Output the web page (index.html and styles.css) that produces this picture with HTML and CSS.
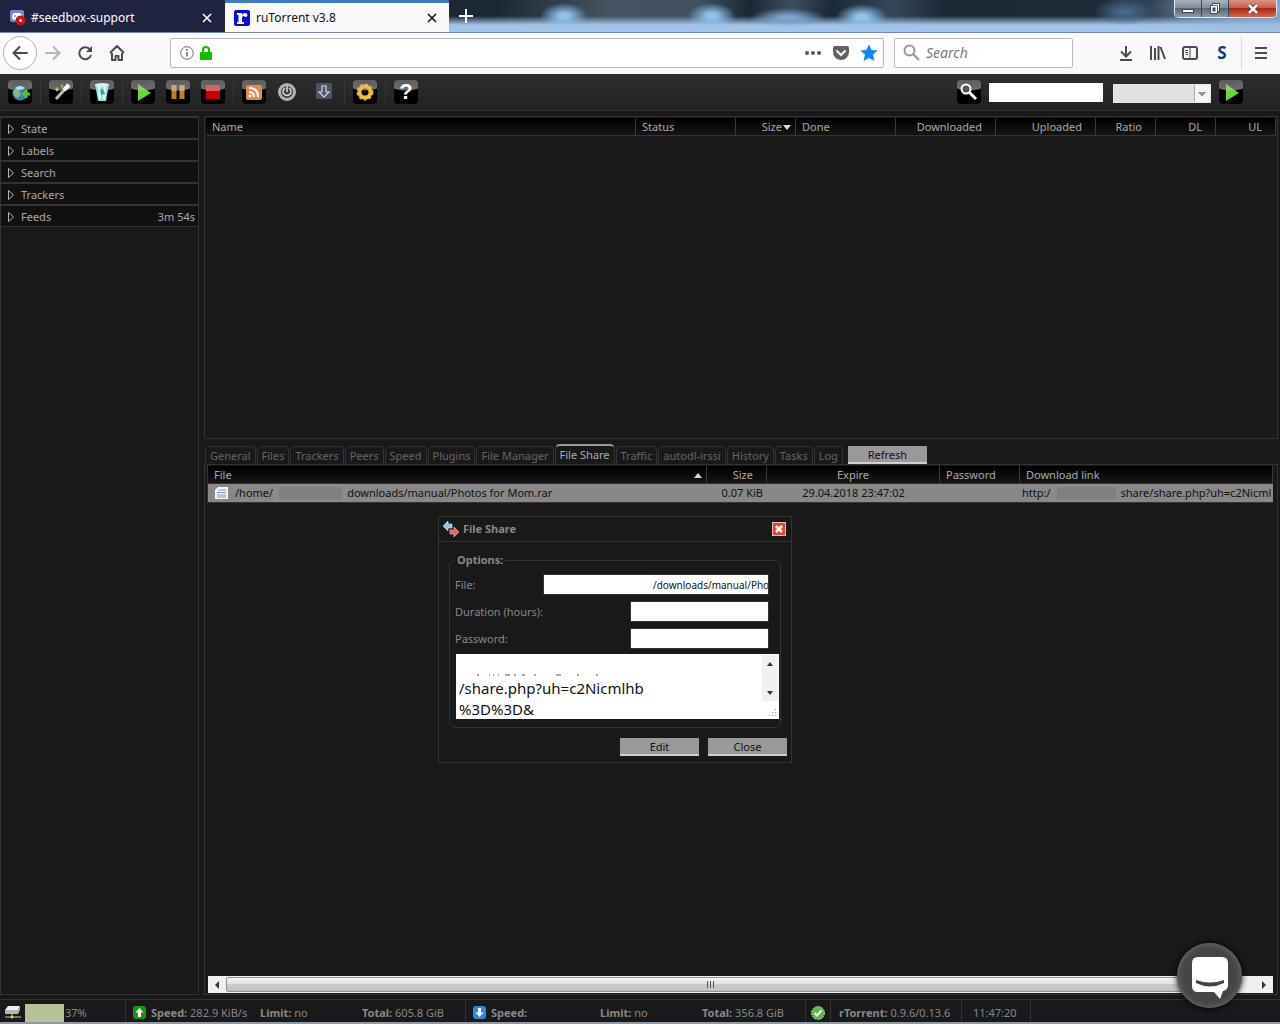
FILE: index.html
```
<!DOCTYPE html>
<html lang="en">
<head>
  <meta charset="UTF-8">
  <meta name="viewport" content="width=device-width, initial-scale=1.0">
  <title>ruTorrent v3.8</title>
  <link rel="stylesheet" href="styles.css">
</head>
<body>
  <!-- browser tabs -->
  <div class="titlebar">
    <div class="browser-tab">
      <svg width="16" height="16" viewBox="0 0 16 16"><rect width="14" height="12" rx="2" fill="#7289da"/><path d="M2 8q0-5 3-5h4q3 0 3 5l-2 2H4z" fill="#fff"/><circle cx="5" cy="6" r="1" fill="#7289da"/><circle cx="10.500" cy="10.500" r="5" fill="#d0101c"/><circle cx="10.500" cy="10.500" r="1.500" fill="#fff"/></svg>
      <span class="browser-tab-title">#seedbox-support</span>
      <button class="tab-close" aria-label="Close tab"><svg width="10" height="10" viewBox="0 0 10 10"><path d="M1 1l8 8M9 1l-8 8" stroke="currentColor" stroke-width="1.600"/></svg></button>
    </div>
    <div class="browser-tab selected">
      <svg width="16" height="16" viewBox="0 0 16 16"><rect width="16" height="16" rx="2" fill="#0b0bd8"/><path d="M3 3h5v2q1-2 3-2 2.500 0 2.500 2T11.500 7Q10 7 10 5.500q-2 .5-2 2.500v4h2v2H3v-2h1.500V5H3z" fill="#fff"/></svg>
      <span class="browser-tab-title">ruTorrent v3.8</span>
      <button class="tab-close" aria-label="Close tab"><svg width="10" height="10" viewBox="0 0 10 10"><path d="M1 1l8 8M9 1l-8 8" stroke="currentColor" stroke-width="1.600"/></svg></button>
    </div>
    <button class="new-tab" aria-label="New tab"><svg width="14" height="14" viewBox="0 0 14 14"><path d="M7 0v14M0 7h14" stroke="#fff" stroke-width="2"/></svg></button>
    <div class="window-buttons">
      <button aria-label="Minimize"><svg width="14" height="12" viewBox="0 0 14 12"><rect x="1.500" y="6.500" width="11" height="3" fill="#fff" stroke="#445"/></svg></button>
      <button aria-label="Restore"><svg width="14" height="12" viewBox="0 0 14 12"><path d="M4.500.5h7v8h-2v2h-7v-8h2z" fill="#fff" stroke="#445"/><rect x="5" y="5" width="2" height="3" fill="#667" stroke="#445"/><path d="M4.500 2.500h5v6" fill="none" stroke="#667"/></svg></button>
      <button class="window-close" aria-label="Close window"><svg width="14" height="12" viewBox="0 0 14 12"><path d="M3 2l8 8M11 2l-8 8" stroke="#433" stroke-width="4"/><path d="M3 2l8 8M11 2l-8 8" stroke="#fff" stroke-width="2.500"/></svg></button>
    </div>
  </div>

  <!-- browser navigation -->
  <div class="navbar">
    <button class="nav-button back" aria-label="Back"><svg width="18" height="16" viewBox="0 0 18 16"><path d="M16 8H3M8.500 2L2.500 8l6 6" fill="none" stroke="#4a4a4f" stroke-width="2" stroke-linecap="round"/></svg></button>
    <button class="nav-button" aria-label="Forward"><svg width="18" height="16" viewBox="0 0 18 16"><path d="M2 8h13M9.500 2l6 6-6 6" fill="none" stroke="#b5b5b8" stroke-width="2" stroke-linecap="round"/></svg></button>
    <button class="nav-button" aria-label="Reload"><svg width="16" height="16" viewBox="0 0 16 16"><path d="M13 4.500A6 6 0 1 0 14 10" fill="none" stroke="#4a4a4f" stroke-width="2"/><path d="M15 1v6H9z" fill="#4a4a4f"/></svg></button>
    <button class="nav-button" aria-label="Home"><svg width="16" height="16" viewBox="0 0 16 16"><path d="M1 8l7-7 7 7M3 8v7h3.500v-4h3v4H13V8" fill="none" stroke="#4a4a4f" stroke-width="2" stroke-linejoin="round"/></svg></button>
    <div class="url-bar">
      <svg width="14" height="14" viewBox="0 0 14 14"><circle cx="7" cy="7" r="6.300" fill="none" stroke="#6a6a6e"/><path d="M7 6v4.500M7 3v1.700" stroke="#6a6a6e" stroke-width="1.500"/></svg>
      <svg width="12" height="14" viewBox="0 0 12 14"><rect y="6" width="12" height="8" rx="1" fill="#12bc00"/><path d="M3 7V4a3 3 0 0 1 6 0v3" fill="none" stroke="#12bc00" stroke-width="2"/></svg>
      <input class="url-input" type="text" aria-label="Address">
      <svg width="16" height="16" viewBox="0 0 16 16"><g fill="#58585c"><circle cx="2" cy="8" r="2"/><circle cx="8" cy="8" r="2"/><circle cx="14" cy="8" r="2"/></g></svg>
      <svg width="16" height="16" viewBox="0 0 16 16"><path d="M2 1h12q2 0 2 2v4a8 8 0 0 1-16 0V3q0-2 2-2z" fill="#636367"/><path d="M4 6l4 4 4-4" fill="none" stroke="#fff" stroke-width="2" stroke-linecap="round"/></svg>
      <svg width="16" height="16" viewBox="0 0 16 16"><path d="M8 0l2.300 5.200 5.700.6-4.300 3.800L13 15.500 8 12.600l-5 2.900 1.300-5.900L0 5.800l5.700-.6z" fill="#0a84ff" stroke="#0a84ff" stroke-width=".6"/></svg>
    </div>
    <div class="search-bar">
      <svg width="17" height="17" viewBox="0 0 17 17"><circle cx="6.500" cy="6.500" r="5" fill="none" stroke="#98989c" stroke-width="2"/><path d="M10 10l6 6" stroke="#98989c" stroke-width="2"/></svg>
      <input class="search-input" type="text" placeholder="Search" aria-label="Search the web">
    </div>
    <div class="nav-tools">
      <button aria-label="Downloads"><svg width="14" height="16" viewBox="0 0 14 16"><path d="M7 1v10M2 6.500l5 5 5-5M1 15h12" fill="none" stroke="#4a4a4f" stroke-width="2"/></svg></button>
      <button aria-label="Library"><svg width="16" height="14" viewBox="0 0 16 14"><path d="M1 0v14M5 2v12M8.500 0v14M10.500 1l4.500 12" stroke="#4a4a4f" stroke-width="2"/></svg></button>
      <button aria-label="Sidebars"><svg width="16" height="14" viewBox="0 0 16 14"><rect x="1" y="1" width="14" height="12" rx="2" fill="none" stroke="#4a4a4f" stroke-width="2"/><path d="M8 1v12M3 4.500h3M3 6.500h3M4 8.500h2" stroke="#4a4a4f"/></svg></button>
      <button class="addon" aria-label="Add-on">S</button>
      <button class="menu" aria-label="Menu"><svg width="12" height="12" viewBox="0 0 12 12"><path d="M0 1h12M0 6h12M0 11h12" stroke="#4a4a4f" stroke-width="2"/></svg></button>
    </div>
  </div>

  <!-- ruTorrent toolbar -->
  <div class="toolbar">
    <button class="tool" aria-label="Add torrent"><svg width="24" height="24" viewBox="0 0 24 24"><circle cx="12" cy="13" r="7.500" fill="#3d7fb4"/><path d="M5 12q3-6 8-6l-2 5 2 3-3 4q-4-1-5-6z" fill="#83b98a"/><path d="M7 8q5-4 10 0-5 4-10 0z" fill="#b9d7e6"/><path d="M18 10v8M14 14h8" stroke="#5ac332" stroke-width="3"/></svg></button>
    <span class="separator"></span>
    <button class="tool" aria-label="Create torrent"><svg width="24" height="24" viewBox="0 0 24 24"><path d="M7 19L17 8" stroke="#bbb" stroke-width="3"/><path d="M15 10l5-5" stroke="#fff" stroke-width="4"/><path d="M8 7l1 2 2 0-2 1-1 2-1-2-2-1 2 0zM13 4l1 2-1 2-1-2zM17 3l1 1-1 1z" fill="#f1c45b"/></svg></button>
    <span class="separator"></span>
    <button class="tool" aria-label="Remove"><svg width="24" height="24" viewBox="0 0 24 24"><path d="M5 4h14l-3 17H8z" fill="#a0ddd9"/><path d="M9 6l1 13M15 6l-1 13" stroke="#dff" stroke-width="2"/><ellipse cx="12" cy="5" rx="7" ry="2" fill="#d9efed"/><path d="M10 10l3-1 2 5-4 1z" fill="#479e9e"/></svg></button>
    <span class="separator"></span>
    <button class="tool" aria-label="Start"><svg width="24" height="24" viewBox="0 0 24 24"><path d="M7 4l13 9-13 8z" fill="#66d832"/><path d="M7 4l9 7H7z" fill="#94ca79"/></svg></button>
    <button class="tool" aria-label="Pause"><svg width="24" height="24" viewBox="0 0 24 24"><path d="M8 5v14M16 5v14" stroke="#b98325" stroke-width="5"/><path d="M8 5v6M16 5v6" stroke="#c8a978" stroke-width="5"/></svg></button>
    <button class="tool" aria-label="Stop"><svg width="24" height="24" viewBox="0 0 24 24"><path d="M5 5h14v14H5z" fill="#c80000"/><path d="M5 5h14v6H5z" fill="#ce6464"/></svg></button>
    <span class="separator"></span>
    <button class="tool" aria-label="RSS"><svg width="24" height="24" viewBox="0 0 24 24"><rect x="4" y="5" width="16" height="15" rx="2" fill="#e38b50"/><circle cx="8" cy="16" r="1.500" fill="#fff"/><path d="M7 12q5 0 5 5M7 8q9 0 9 9" fill="none" stroke="#fff" stroke-width="2"/></svg></button>
    <button class="tool plain throttle" aria-label="Throttle"><svg width="24" height="24" viewBox="0 0 24 24"><circle cx="12" cy="12" r="7.500" fill="#3c3c3c" stroke="#b4b4b4" stroke-width="3"/><path d="M10 8a4 4 0 1 0 4 0M12 6v6" fill="none" stroke="#ddd" stroke-width="1.500"/></svg></button>
    <button class="tool plain" aria-label="Unpack"><svg width="24" height="24" viewBox="0 0 24 24"><rect x="4" y="3" width="16" height="16" rx="2" fill="#4e5368"/><path d="M10 6h4v6h3l-5 5-5-5h3z" fill="#4e5368" stroke="#d5d7e2" stroke-width="1.200"/></svg></button>
    <span class="separator"></span>
    <button class="tool" aria-label="Settings"><svg width="24" height="24" viewBox="0 0 24 24"><circle cx="12" cy="12" r="7.500" fill="none" stroke="#e0a92d" stroke-width="2" stroke-dasharray="3 2"/><circle cx="12" cy="12" r="5.500" fill="none" stroke="#eebf45" stroke-width="4"/></svg></button>
    <span class="separator"></span>
    <button class="tool help" aria-label="Help">?</button>
    <div class="toolbar-search">
      <button class="tool" aria-label="Find"><svg width="24" height="24" viewBox="0 0 24 24"><circle cx="9" cy="9" r="4.500" fill="#555" stroke="#fff" stroke-width="2"/><path d="M12 12l7 7" stroke="#fff" stroke-width="3"/></svg></button>
      <input class="find" type="text" aria-label="Find torrent">
      <select class="engine" aria-label="Search engine" disabled><option></option></select>
      <button class="tool" aria-label="Go"><svg width="24" height="24" viewBox="0 0 24 24"><path d="M7 4l13 9-13 8z" fill="#66d832"/><path d="M7 4l9 7H7z" fill="#94ca79"/></svg></button>
    </div>
  </div>

  <div class="main">
    <div class="sidebar">
      <button class="category"><svg width="8" height="12" viewBox="0 0 8 12"><path d="M1.500 1.500v9l5-4.500z" fill="none" stroke="#b5b5b5"/></svg>State</button>
      <button class="category"><svg width="8" height="12" viewBox="0 0 8 12"><path d="M1.500 1.500v9l5-4.500z" fill="none" stroke="#b5b5b5"/></svg>Labels</button>
      <button class="category"><svg width="8" height="12" viewBox="0 0 8 12"><path d="M1.500 1.500v9l5-4.500z" fill="none" stroke="#b5b5b5"/></svg>Search</button>
      <button class="category"><svg width="8" height="12" viewBox="0 0 8 12"><path d="M1.500 1.500v9l5-4.500z" fill="none" stroke="#b5b5b5"/></svg>Trackers</button>
      <button class="category"><svg width="8" height="12" viewBox="0 0 8 12"><path d="M1.500 1.500v9l5-4.500z" fill="none" stroke="#b5b5b5"/></svg>Feeds<span class="timer">3m 54s</span></button>
    </div>

    <div class="content">
      <div class="torrents">
        <table class="grid">
          <colgroup><col><col class="w100"><col class="w60"><col class="w100"><col class="w100"><col class="w100"><col class="w60"><col class="w60"><col class="w60"></colgroup>
          <thead>
            <tr><th>Name</th><th>Status</th><th class="num">Size<i class="sort-down"></i></th><th>Done</th><th class="num">Downloaded</th><th class="num">Uploaded</th><th class="num">Ratio</th><th class="num">DL</th><th class="num">UL</th></tr>
          </thead>
        </table>
      </div>

      <div class="tabs">
        <button class="tab">General</button>
        <button class="tab">Files</button>
        <button class="tab">Trackers</button>
        <button class="tab">Peers</button>
        <button class="tab">Speed</button>
        <button class="tab">Plugins</button>
        <button class="tab">File Manager</button>
        <button class="tab active">File Share</button>
        <button class="tab">Traffic</button>
        <button class="tab">autodl-irssi</button>
        <button class="tab">History</button>
        <button class="tab">Tasks</button>
        <button class="tab">Log</button>
        <button class="button refresh">Refresh</button>
      </div>

      <div class="details">
        <table class="grid shares">
          <colgroup><col><col class="w60"><col class="w173"><col class="w80"><col class="w253"></colgroup>
          <thead>
            <tr><th>File<i class="sort-up"></i></th><th class="num">Size</th><th class="center">Expire</th><th>Password</th><th>Download link</th></tr>
          </thead>
          <tbody>
            <tr>
              <td><span class="cell"><svg class="file-icon" width="14" height="12" viewBox="0 0 14 12"><path d="M0 3l3-3h10v12H0z" fill="#f2f7fc"/><path d="M3 3h8M2 5.500h9M2 8h9M2 10h9" stroke="#7d93ad"/></svg>/home/<span class="masked"></span>downloads/manual/Photos for Mom.rar</span></td>
              <td class="size">0.07 KiB</td>
              <td class="center">29.04.2018 23:47:02</td>
              <td></td>
              <td class="link"><span class="cell">http:/<span class="masked"></span>share/share.php?uh=c2Nicml</span></td>
            </tr>
          </tbody>
        </table>
        <div class="scrollbar">
          <button class="scroll-arrow" aria-label="Scroll left"><svg width="4" height="8" viewBox="0 0 4 8"><path d="M4 0v8L0 4z" fill="#333"/></svg></button>
          <div class="scroll-thumb"><i></i><i></i><i></i></div>
          <button class="scroll-arrow" aria-label="Scroll right"><svg width="4" height="8" viewBox="0 0 4 8"><path d="M0 0v8l4-4z" fill="#333"/></svg></button>
        </div>
      </div>
    </div>
  </div>

  <!-- status bar -->
  <div class="statusbar">
    <div class="status disk">
      <svg width="16" height="13" viewBox="0 0 16 13"><path d="M3 0h12l-2 4H0z" fill="#eee"/><path d="M0 4h13l2-4v4l-2 4H0z" fill="#b5b5b5"/><path d="M0 11h16M7 8v4" stroke="#ccc"/><circle cx="7" cy="11" r="1.500" fill="#ded53b"/></svg>
      <div class="meter"></div><span>37%</span>
    </div>
    <div class="status traffic">
      <svg width="13" height="13" viewBox="0 0 13 13"><rect width="13" height="13" rx="3" fill="#159615"/><path d="M6.500 2l4 4.500H8V11H5V6.500H2.500z" fill="#fff"/></svg>
      <span class="speed"><b>Speed:</b> 282.9 KiB/s</span><span class="limit"><b>Limit:</b> no</span><span><b>Total:</b> 605.8 GiB</span>
    </div>
    <div class="status traffic">
      <svg width="13" height="13" viewBox="0 0 13 13"><rect width="13" height="13" rx="3" fill="#2f86dd"/><path d="M6.500 11l4-4.500H8V2H5v4.500H2.500z" fill="#fff"/></svg>
      <span class="speed"><b>Speed:</b></span><span class="limit"><b>Limit:</b> no</span><span><b>Total:</b> 356.8 GiB</span>
    </div>
    <div class="status ok"><svg width="14" height="14" viewBox="0 0 14 14"><circle cx="7" cy="7" r="6.500" fill="#62b54c" stroke="#a2d792" stroke-dasharray="2 1"/><path d="M3.500 7l2.500 2.500 4.500-5" fill="none" stroke="#fff" stroke-width="2"/></svg></div>
    <div class="status version"><span><b>rTorrent:</b> 0.9.6/0.13.6</span></div>
    <div class="status clock">11:47:20</div>
  </div>
  <div class="taskbar"></div>

  <!-- File Share dialog -->
  <div class="dialog" role="dialog" aria-labelledby="dialog-title">
    <div class="dialog-header">
      <svg width="16" height="16" viewBox="0 0 16 16"><path d="M0 5l5-5v3h4v4H5v3z" fill="#8fc6ea" stroke="#d4effc" stroke-width=".6"/><path d="M16 11l-5-5v3H7v4h4v3z" fill="#df6661" stroke="#f8c5bc" stroke-width=".6"/></svg>
      <span id="dialog-title">File Share</span>
      <button class="dialog-close" aria-label="Close dialog"><svg width="12" height="12" viewBox="0 0 12 12"><path d="M3 3l6 6M9 3L3 9" stroke="#fff" stroke-width="2.500"/></svg></button>
    </div>
    <fieldset>
      <legend>Options:</legend>
      <div class="field"><label for="file">File:</label><input class="file-input" id="file" type="text" value="/downloads/manual/Pho"></div>
      <div class="field"><label for="duration">Duration (hours):</label><input id="duration" type="text"></div>
      <div class="field"><label for="password">Password:</label><input id="password" type="text"></div>
      <div class="link-box">
        <textarea aria-label="Download link" spellcheck="false">

/share.php?uh=c2Nicmlhb
%3D%3D&amp;</textarea>
        <svg class="remnant" width="130" height="2" viewBox="0 0 130 2"><path d="M3 1h2M15 1h1M19 1h1M24 1h1M31 1h5M40 1h2M48 1h3M60 1h2M82 1h5M103 1h2M122 1h2" stroke="#555"/></svg>
        <div class="mini-scroll">
          <svg width="6" height="4" viewBox="0 0 6 4"><path d="M0 4l3-4 3 4z" fill="#333"/></svg>
          <svg width="6" height="4" viewBox="0 0 6 4"><path d="M0 0l3 4 3-4z" fill="#333"/></svg>
        </div>
        <svg class="grip" width="9" height="9" viewBox="0 0 9 9"><path d="M7 0h1v1H7zM4 3h1v1H4zM7 3h1v1H7zM1 6h1v1H1zM4 6h1v1H4zM7 6h1v1H7z" fill="#999"/></svg>
      </div>
    </fieldset>
    <div class="dialog-buttons">
      <button class="button">Edit</button>
      <button class="button">Close</button>
    </div>
  </div>

  <button class="chat" aria-label="Open chat"><svg width="36" height="42" viewBox="0 0 36 42"><path d="M6 0h24q6 0 6 6v22q0 5-5 6l-3 8-6-7H6q-6 0-6-6V6q0-6 6-6z" fill="#fff"/><path d="M4 23q14 5 28 0v3q-14 7-28 0z" fill="#454545"/></svg></button>
</body>
</html>
```
FILE: styles.css
```
* {
  box-sizing: border-box;
}
body {
  margin: 0;
  height: 100vh;
  display: flex;
  flex-direction: column;
  overflow: hidden;
  background-color: #191919;
  color: #999;
  font-family: "Noto Sans", "Open Sans", sans-serif;
  font-size: 11px;
  line-height: 14px;
}
button, input, select, textarea {
  font: inherit;
  margin: 0;
  padding: 0;
  border: none;
  border-radius: 0;
  outline: none;
}
button {
  background: none;
  color: inherit;
}
svg {
  display: block;
  flex-shrink: 0;
}

/* browser window */
.titlebar {
  display: flex;
  flex-shrink: 0;
  height: 33px;
  border-bottom: 1px solid #7186a0;
  background:
    radial-gradient(ellipse 24px 13px at 564px 16px, #8fc3ee 20%, transparent),
    radial-gradient(ellipse 24px 13px at 712px 16px, #8fc3ee 20%, transparent),
    radial-gradient(ellipse 38px 10px at 788px 18px, #7ba5d0 20%, transparent),
    radial-gradient(ellipse 26px 13px at 862px 17px, #8fc3ee 20%, transparent),
    radial-gradient(ellipse 30px 14px at 1124px 12px, #4d6f94, transparent),
    radial-gradient(ellipse 120px 30px at 1270px 8px, #8eb0d4, transparent),
    linear-gradient(rgba(166, 200, 237, 0) 16px, #a3c5ea 25px),
    linear-gradient(100deg, #1b2735 490px, #455361 600px, #415061 690px, #1a2836 740px, #3d4d5d 780px, #1b2937 820px, #35475a 880px, #1c2a38 930px, #1d2b39 1080px, #5d7896 1250px);
}
.browser-tab {
  display: flex;
  align-items: center;
  width: 225px;
  padding: 3px 13px 0 10px;
  background-color: #202340;
  color: #fff;
  font-size: 12px;
  line-height: 16px;
}
.browser-tab.selected {
  width: 224px;
  padding: 0 12px 0 9px;
  border-top: 3px solid #3d7cc4;
  background-color: #f9f9fa;
  color: #111;
}
.browser-tab-title {
  flex: 1;
  margin-left: 5px;
}
.selected .browser-tab-title {
  margin-left: 6px;
}
.new-tab {
  padding: 0 10px;
}
.window-buttons {
  display: flex;
  height: 18px;
  margin-left: auto;
  margin-right: 3px;
  border: 1px solid #dfe8f2;
  border-top: none;
  border-radius: 0 0 5px 5px;
  overflow: hidden;
}
.window-buttons button {
  display: flex;
  align-items: center;
  justify-content: center;
  width: 27px;
  border-right: 1px solid #39475a;
  background: linear-gradient(#a9b3be, #7d8996 50%, #5a6673 50%, #8b9cae);
}
.window-buttons .window-close {
  width: 47px;
  border: none;
  background: linear-gradient(#d99384, #c45a48 50%, #a62b16 50%, #d3684a);
}
.navbar {
  display: flex;
  align-items: center;
  flex-shrink: 0;
  height: 41px;
  padding: 0 0 2px 3px;
  background-color: #f9f9fb;
}
.nav-button {
  display: flex;
  align-items: center;
  justify-content: center;
  width: 32px;
  height: 32px;
}
.nav-button.back {
  width: 34px;
  height: 34px;
  border: 1px solid #b1b1b3;
  border-radius: 50%;
  background-color: #fff;
}
.url-bar, .search-bar {
  display: flex;
  align-items: center;
  height: 30px;
  border: 1px solid #b8b8ba;
  border-radius: 2px;
  background-color: #fff;
}
.url-bar {
  flex: 1;
  gap: 12px;
  margin-left: 37px;
  padding: 0 6px 0 9px;
}
.url-bar svg + svg {
  margin-left: -6px;
}
.url-input {
  flex: 1;
  min-width: 0;
}
.url-input + svg ~ svg {
  margin-left: 0;
}
.search-bar {
  width: 179px;
  gap: 6px;
  margin: 0 37px 0 10px;
  padding: 0 8px;
}
.search-input {
  width: 100%;
  font-size: 14px;
  line-height: 20px;
}
.search-input::placeholder {
  color: #77777a;
  font-style: italic;
}
.nav-tools {
  display: flex;
}
.nav-tools button {
  display: flex;
  align-items: center;
  justify-content: center;
  width: 32px;
  height: 34px;
}
.nav-tools .addon {
  color: #0a3a80;
  font-size: 17px;
  font-weight: bold;
}
.nav-tools .menu {
  width: 39px;
  margin-left: 3px;
  border-left: 1px solid #dcdcdf;
}

/* toolbar */
.toolbar {
  display: flex;
  align-items: center;
  flex-shrink: 0;
  height: 37px;
  padding: 0 37px 0 8px;
  border-bottom: 1px solid #383838;
  background: linear-gradient(#2e2e2e, #222);
}
.tool {
  width: 24px;
  height: 24px;
  margin-right: 11px;
  border-radius: 4px;
  background: radial-gradient(ellipse 22px 11px at 50% 0, #5a5a5a, #6c6c6c 90%, #000);
}
.tool.plain {
  margin-right: 13px;
  background: none;
}
.tool.throttle {
  margin-left: -2px;
}
.tool.plain + .separator {
  margin-left: -5px;
}
.separator {
  width: 1px;
  height: 24px;
  margin: 0 8px 0 -3px;
  background-color: #363636;
}
.tool.help {
  color: #fff;
  font-family: "Liberation Sans", sans-serif;
  font-size: 22px;
  font-weight: bold;
  line-height: 24px;
}
.toolbar-search {
  display: flex;
  align-items: center;
  margin-left: auto;
}
.toolbar-search .tool {
  margin: 0;
}
.find {
  width: 114px;
  height: 19px;
  margin: 0 10px 0 8px;
  background-color: #fff;
}
.engine {
  width: 98px;
  height: 19px;
  margin: 2px 8px 0 0;
  appearance: none;
  opacity: 1;
  border: 1px solid #e8e8e8;
  background:
    linear-gradient(45deg, transparent 50%, #999 50%) right 8px top 7px / 4px 4px no-repeat,
    linear-gradient(-45deg, transparent 50%, #999 50%) right 4px top 7px / 4px 4px no-repeat,
    linear-gradient(#f4f4f4, #f4f4f4) right / 15px 100% no-repeat,
    linear-gradient(#aaa, #aaa) right / 16px 100% no-repeat,
    #e1e1e1;
}

/* main area */
.main {
  display: flex;
  flex: 1;
  gap: 5px;
  min-height: 0;
  padding: 5px 2px 4px 0;
}
.sidebar {
  width: 199px;
  border: 1px solid #333;
}
.category {
  display: flex;
  align-items: center;
  width: 100%;
  height: 22px;
  padding: 2px 3px 0 6px;
  border-top: 1px solid #333;
  border-bottom: 1px solid #333;
  background-color: #111;
  color: #aaa;
}
.category svg {
  margin-right: 6px;
}
.timer {
  margin-left: auto;
}
.content {
  display: flex;
  flex: 1;
  flex-direction: column;
  min-width: 0;
}
.torrents {
  height: 323px;
  padding: 1px;
  border: 1px solid #333;
}
.grid {
  width: 100%;
  table-layout: fixed;
  border-collapse: separate;
  border-spacing: 0;
}
.grid th {
  position: relative;
  height: 18px;
  padding: 2px 6px 1px;
  border-right: 1px solid #3a3a3a;
  border-bottom: 1px solid #333;
  background: linear-gradient(#000, #151515);
  color: #aaa;
  font-weight: normal;
  text-align: left;
}
.grid .num {
  padding-right: 13px;
  text-align: right;
}
.grid .center {
  text-align: center;
}
.w60 { width: 60px; }
.w80 { width: 80px; }
.w100 { width: 100px; }
.w173 { width: 173px; }
.w253 { width: 253px; }
.sort-down, .sort-up {
  position: absolute;
  top: 7px;
  right: 4px;
  border: 4px solid transparent;
}
.sort-down {
  border-top: 5px solid #ddd;
  border-bottom: none;
}
.sort-up {
  border-top: none;
  border-bottom: 5px solid #ddd;
}

/* tabs */
.tabs {
  display: flex;
  align-items: flex-end;
  gap: 1px;
  height: 25px;
  padding-left: 1px;
}
.tab {
  height: 18px;
  padding: 1px 4px 0;
  border: 1px solid #333;
  border-bottom: none;
  border-radius: 5px 5px 0 0;
  color: #666;
  white-space: nowrap;
}
.tab.active {
  height: 20px;
  padding: 0 4px;
  border-top: 2px solid #999;
  color: #aaa;
}
.button {
  width: 79px;
  height: 18px;
  padding-top: 2px;
  border-bottom: 2px solid #d0d0d0;
  background-color: #999;
  color: #111;
  text-align: center;
}
.refresh {
  margin-left: 4px;
}

/* details panel */
.details {
  display: flex;
  flex: 1;
  flex-direction: column;
  padding: 1px 4px 1px 2px;
  border: 1px solid #333;
}
.shares {
  border-left: 1px solid #333;
}
.shares td {
  height: 19px;
  padding: 0;
  border-bottom: 1px solid #333;
  background-color: #888;
  color: #111;
  overflow: hidden;
  white-space: nowrap;
}
.cell {
  display: flex;
  align-items: center;
  height: 18px;
}
.file-icon {
  margin: 0 6px 0 7px;
}
.shares .size {
  padding-right: 4px;
  text-align: right;
}
.link .cell {
  padding-left: 2px;
}
.masked {
  flex-shrink: 0;
  width: 74px;
  height: 20px;
  border: 4px solid #8b8b8b;
  border-width: 4px 5px 4px 6px;
  background-color: #7f7f7f;
}
.link .masked {
  width: 70px;
}
.scrollbar {
  display: flex;
  height: 17px;
  margin-top: auto;
  margin-left: 1px;
  background-color: #f0f0f0;
}
.scroll-arrow {
  display: flex;
  align-items: center;
  justify-content: center;
  width: 18px;
}
.scroll-thumb {
  display: flex;
  align-items: center;
  justify-content: center;
  gap: 2px;
  flex: 1;
  margin: 1px 0;
  border: 1px solid #929292;
  border-radius: 2px;
  background: linear-gradient(#f4f4f5, #dedee0 50%, #cbcbce 50%, #c0c0c5);
}
/* the thumb runs on under the chat button, its grip stays left of centre */
.scroll-thumb {
  flex: 0 0 91%;
  margin-right: auto;
}
.scroll-thumb i {
  width: 1px;
  height: 7px;
  background-color: #555;
}

/* status bar */
.statusbar {
  display: flex;
  flex-shrink: 0;
  height: 23px;
  border-top: 1px solid #333;
  color: #888;
}
.status {
  display: flex;
  align-items: center;
  padding-top: 3px;
  border-right: 1px solid #333;
  white-space: nowrap;
}
.disk {
  width: 126px;
  padding-left: 5px;
}
.meter {
  align-self: flex-end;
  width: 39px;
  height: 18px;
  margin: 0 1px 0 4px;
  background-color: #b7c299;
}
.traffic {
  width: 340px;
  padding-left: 7px;
}
.speed {
  width: 109px;
  margin-left: 5px;
}
.limit {
  width: 102px;
}
.ok {
  width: 25px;
  justify-content: center;
}
.version {
  width: 131px;
  padding-left: 8px;
}
.clock {
  width: 69px;
  padding-left: 11px;
}
.taskbar {
  flex-shrink: 0;
  height: 2px;
  background-color: #8d9aa8;
}

/* dialog */
.dialog {
  position: absolute;
  top: 516px;
  left: 438px;
  width: 354px;
  border: 1px solid #333;
  background-color: #191919;
}
.dialog-header {
  display: flex;
  align-items: center;
  height: 25px;
  padding: 0 5px 0 4px;
  border-bottom: 1px solid #333;
  color: #888;
  font-weight: bold;
}
.dialog-header span {
  margin-left: 4px;
}
.dialog-close {
  margin-left: auto;
  border: 1px solid #f1b9ae;
  background-color: #d84b3b;
}
fieldset {
  margin: 11px 10px 0;
  padding: 4px 1px 8px 5px;
  border: 1px solid #333;
  border-radius: 6px;
}
legend {
  padding: 0 2px;
  font-weight: bold;
  color: #888;
}
.field {
  display: flex;
  align-items: center;
  justify-content: space-between;
  height: 27px;
  padding-right: 10px;
  color: #888;
}
.field input {
  width: 139px;
  height: 21px;
  border: 1px solid #333;
  background-color: #fff;
  color: #111;
}
.field .file-input {
  width: 226px;
  padding: 0 0 0 109px;
  font-size: 10px;
}
.link-box {
  position: relative;
  height: 65px;
  margin: 2px 0 0 1px;
}
.link-box textarea {
  display: block;
  width: 100%;
  height: 65px;
  padding: 3px 20px 0 3px;
  overflow: hidden;
  resize: none;
  background-color: #fff;
  color: #111;
  font-size: 15px;
  line-height: 21px;
}
.remnant {
  position: absolute;
  top: 20px;
  left: 18px;
}
.mini-scroll {
  position: absolute;
  top: 1px;
  right: 1px;
  display: flex;
  flex-direction: column;
  align-items: center;
  justify-content: space-between;
  width: 16px;
  height: 46px;
  padding: 7px 0 6px;
  background-color: #f0f0f0;
}
.grip {
  position: absolute;
  right: 2px;
  bottom: 1px;
}
.dialog-buttons {
  display: flex;
  justify-content: flex-end;
  gap: 9px;
  padding: 10px 4px 6px;
}

/* chat button */
.chat {
  position: absolute;
  right: 38px;
  bottom: 16px;
  display: flex;
  align-items: center;
  justify-content: center;
  width: 65px;
  height: 65px;
  padding-top: 4px;
  border-radius: 50%;
  background-color: #454545;
  box-shadow: inset 0 0 6px #777, 0 0 6px #000;
}
```
